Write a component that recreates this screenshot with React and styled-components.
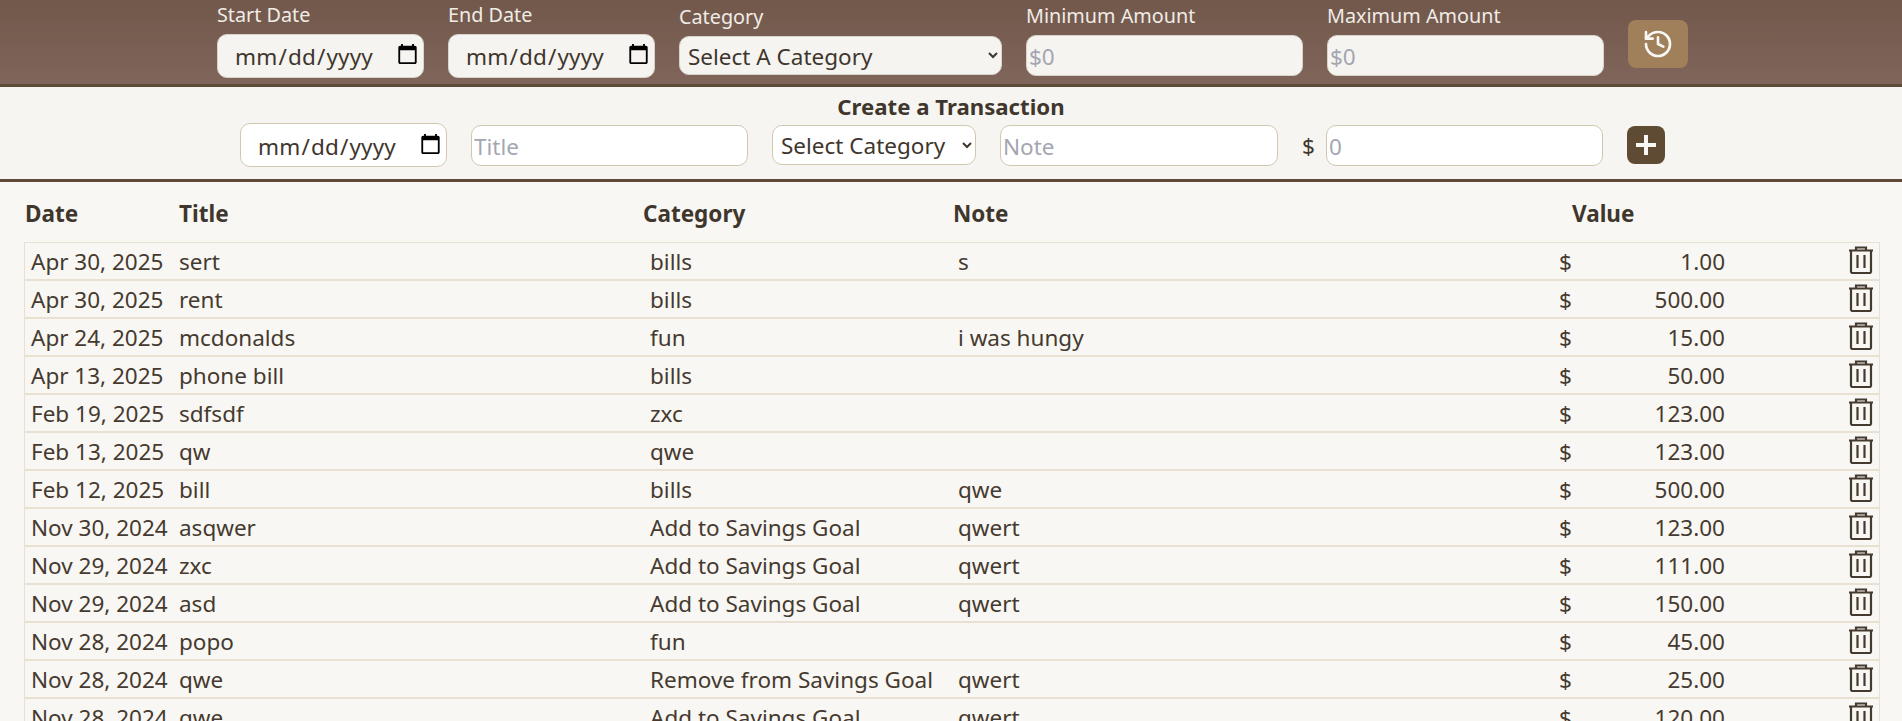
import React from "react";
import styled, { createGlobalStyle } from "styled-components";

const GlobalStyle = createGlobalStyle`
  html, body { margin: 0; padding: 0; background: #f9f7f3; }
  body { font-family: "Noto Sans", "Open Sans", sans-serif; color: #453a30; overflow: hidden; }
  * { box-sizing: border-box; }
`;
const Page = styled.div`height: 721px; overflow: hidden; background: #f9f7f3;`;
const FilterBar = styled.header`
  height: 87px; display: flex; align-items: center; padding: 0 0 6px 217px; gap: 24px;
  background: linear-gradient(180deg, #72574b 0%, #80665a 100%);
  border-bottom: 3px solid #5f4a38;
`;
const Field = styled.label`display: flex; flex-direction: column; gap: 6px; color: #f0ece6; font-size: 19.8px; line-height: 27px;`;
const baseInput = `
  font-family: inherit; font-size: 22.5px; border-radius: 10px; color: #3f362d; outline: none;
`;
const dateIndicator = `
  &::-webkit-calendar-picker-indicator { width: 23px; height: 23px; margin: 0 -12px 4px 0; padding: 0; }
  &::-webkit-datetime-edit { letter-spacing: 0.15px; }
`;
const FilterInput = styled.input`
  ${baseInput}
  ${dateIndicator}
  width: ${(p) => p.$w}px; height: ${(p) => p.$h}px; background: #f6f4f0; border: 1px solid #d9d3ca; padding: 2px ${(p) => p.$pad}px 0;
  &::placeholder { color: #a4a6b2; }
`;
const FilterSelect = styled.select`
  ${baseInput}
  width: 323px; height: 39px; background: #f6f4f0; border: 1px solid #d9d3ca; padding: 1px 4px 0;
`;
const HistoryButton = styled.button`
  width: 60px; height: 48px; margin-top: 10px; border: none; border-radius: 8px; background: #a07f5b; color: #f9f7f3;
  display: flex; align-items: center; justify-content: center; padding: 0;
`;
const CreateSection = styled.section`
  height: 95px; border-bottom: 3px solid #5f4a38; display: flex; flex-direction: column; background: #f7f5f1;
`;
const CreateTitle = styled.h2`margin: 6px 0 1px; font-size: 22.2px; font-weight: 700; line-height: 28px; text-align: center; color: #3f362d;`;
const CreateRow = styled.div`display: flex; align-items: center; gap: 24px; padding-left: 240px; margin-top: 1px;`;
const CreateInput = styled.input`
  ${baseInput}
  ${dateIndicator}
  width: ${(p) => p.$w}px; height: ${(p) => p.$h}px; background: #fff; border: 1px solid #d3c7b0; padding: 2px ${(p) => p.$pad}px 0;
  &::placeholder { color: #a4a6b2; }
`;
const CreateSelect = styled.select`
  ${baseInput}
  width: 204px; height: 40px; background: #fff; border: 1px solid #d3c7b0; padding: 1px 0 0 4px;
`;
const Amount = styled.span`display: flex; align-items: center; gap: 11px; font-size: 22.5px; color: #3f362d;`;
const AddButton = styled.button`
  width: 38px; height: 38px; border: none; border-radius: 8px; background: #5f4a34; color: #f9f7f3; padding: 0;
  display: flex; align-items: center; justify-content: center;
`;
const TableHead = styled.div`
  display: grid; grid-template-columns: 154px 464px 310px 619px 1fr; padding: 18px 0 0 25px; height: 60px;
  font-weight: 700; font-size: 22.5px; line-height: 28px; color: #3f362d;
`;
const Rows = styled.div`margin: 0 22px 0 24px; border: 1px solid #e8e0d0; border-bottom: 0;`;
const Row = styled.div`
  display: grid; grid-template-columns: 148px 471px 308px 601px 166px 1fr; height: 38px; padding-left: 6px;
  font-size: 22.5px; line-height: 37px; border-bottom: 2px solid #e8e0d0; color: #453a30;
`;
const Money = styled.span`display: flex; justify-content: space-between;`;
const TrashCell = styled.span`display: flex; justify-content: flex-end; padding: 3px 5px 0 0;`;

const TrashIcon = () => (
  <svg width="26" height="28" viewBox="0 0 26 28" fill="none" stroke="currentColor" strokeWidth="2.2">
    <path d="M1 4.500h24M8 4V1.500h10V4M3 5v21a1.500 1.500 0 0 0 1.500 1h17a1.500 1.500 0 0 0 1.500-1V5M9.500 9v13M16.500 9v13" />
  </svg>
);
const HistoryIcon = () => (
  <svg width="32" height="32" viewBox="0 0 24 24" fill="none" stroke="currentColor" strokeWidth="2" strokeLinecap="round" strokeLinejoin="round">
    <path d="M3 12a9 9 0 1 0 9-9 9.750 9.750 0 0 0-6.740 2.740L3 8" /><path d="M3 3v5h5" /><path d="M12 7v5l4 2" />
  </svg>
);
const PlusIcon = () => (
  <svg width="24" height="24" viewBox="0 0 24 24" stroke="currentColor" strokeWidth="4"><path d="M12 2v20M2 12h20" /></svg>
);

const data = [
  ["Apr 30, 2025", "sert", "bills", "s", "1.00"],
  ["Apr 30, 2025", "rent", "bills", "", "500.00"],
  ["Apr 24, 2025", "mcdonalds", "fun", "i was hungy", "15.00"],
  ["Apr 13, 2025", "phone bill", "bills", "", "50.00"],
  ["Feb 19, 2025", "sdfsdf", "zxc", "", "123.00"],
  ["Feb 13, 2025", "qw", "qwe", "", "123.00"],
  ["Feb 12, 2025", "bill", "bills", "qwe", "500.00"],
  ["Nov 30, 2024", "asqwer", "Add to Savings Goal", "qwert", "123.00"],
  ["Nov 29, 2024", "zxc", "Add to Savings Goal", "qwert", "111.00"],
  ["Nov 29, 2024", "asd", "Add to Savings Goal", "qwert", "150.00"],
  ["Nov 28, 2024", "popo", "fun", "", "45.00"],
  ["Nov 28, 2024", "qwe", "Remove from Savings Goal", "qwert", "25.00"],
  ["Nov 28, 2024", "qwe", "Add to Savings Goal", "qwert", "120.00"],
];

export default function App() {
  return (
    <Page>
      <GlobalStyle />
      <FilterBar>
        <Field>Start Date<FilterInput type="date" $w={207} $h={44} $pad={16} /></Field>
        <Field>End Date<FilterInput type="date" $w={207} $h={44} $pad={16} /></Field>
        <Field>Category<FilterSelect><option>Select A Category</option></FilterSelect></Field>
        <Field>Minimum Amount<FilterInput placeholder="$0" $w={277} $h={41} $pad={2} /></Field>
        <Field>Maximum Amount<FilterInput placeholder="$0" $w={277} $h={41} $pad={2} /></Field>
        <HistoryButton><HistoryIcon /></HistoryButton>
      </FilterBar>
      <CreateSection>
        <CreateTitle>Create a Transaction</CreateTitle>
        <CreateRow>
          <CreateInput type="date" $w={207} $h={44} $pad={16} />
          <CreateInput placeholder="Title" $w={277} $h={41} $pad={2} />
          <CreateSelect><option>Select Category</option></CreateSelect>
          <CreateInput placeholder="Note" $w={278} $h={41} $pad={2} />
          <Amount>$<CreateInput placeholder="0" $w={277} $h={41} $pad={2} /></Amount>
          <AddButton><PlusIcon /></AddButton>
        </CreateRow>
      </CreateSection>
      <TableHead><span>Date</span><span>Title</span><span>Category</span><span>Note</span><span>Value</span></TableHead>
      <Rows>
        {data.map((r, i) => (
          <Row key={i}>
            <span>{r[0]}</span><span>{r[1]}</span><span>{r[2]}</span><span>{r[3]}</span>
            <Money><span>$</span><span>{r[4]}</span></Money>
            <TrashCell><TrashIcon /></TrashCell>
          </Row>
        ))}
      </Rows>
    </Page>
  );
}
